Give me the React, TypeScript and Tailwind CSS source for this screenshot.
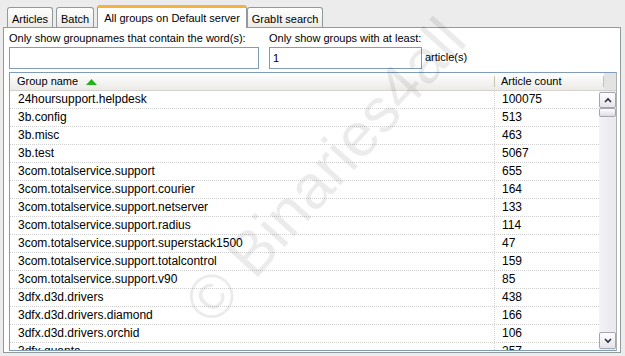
import { FC } from "react";

const rows: [string, string][] = [
    ["24hoursupport.helpdesk", "100075"],
    ["3b.config", "513"],
    ["3b.misc", "463"],
    ["3b.test", "5067"],
    ["3com.totalservice.support", "655"],
    ["3com.totalservice.support.courier", "164"],
    ["3com.totalservice.support.netserver", "133"],
    ["3com.totalservice.support.radius", "114"],
    ["3com.totalservice.support.superstack1500", "47"],
    ["3com.totalservice.support.totalcontrol", "159"],
    ["3com.totalservice.support.v90", "85"],
    ["3dfx.d3d.drivers", "438"],
    ["3dfx.d3d.drivers.diamond", "166"],
    ["3dfx.d3d.drivers.orchid", "106"],
    ["3dfx.quanta", "257"],
];

const Tab: FC<{ label: string; width: string; active?: boolean }> = ({ label, width, active }) =>
    active ? (
        <div className={`relative z-10 -mb-px h-[23px] text-center pt-[2px] bg-white border border-b-0 border-[#919b9c] rounded-t-[3px] border-t-[3px] border-t-[#f5b33d] whitespace-nowrap ${width}`}>
            {label}
        </div>
    ) : (
        <div className={`mt-[3px] h-[20px] text-center pt-[3px] bg-gradient-to-b from-white to-[#ecebe6] border border-b-0 border-[#919b9c] rounded-t-[3px] whitespace-nowrap ${width}`}>
            {label}
        </div>
    );

const App: FC = () => {
    return (
        <div
            className="relative w-[625px] h-[356px] overflow-hidden bg-[#ececec] text-[11px] text-black"
            style={{ fontFamily: '"Liberation Sans", Arial, sans-serif' }}
        >
            <div className="flex items-end h-[27px] pl-[7px] pt-[4px]">
                <Tab label="Articles" width="w-[46px]" />
                <div className="w-[3px]" />
                <Tab label="Batch" width="w-[38px]" />
                <div className="w-[3px]" />
                <Tab label="All groups on Default server" width="w-[150px]" active />
                <Tab label="GrabIt search" width="w-[76px]" />
            </div>

            <div className="ml-[3px] mr-[4px] h-[326px] bg-white border border-[#919b9c] flex flex-col pl-[5px] pr-[3px]">
                <div className="flex gap-[10px] pt-[2px]">
                    <div className="flex flex-col">
                        <span className="h-[17px] leading-[16px]">Only show groupnames that contain the word(s):</span>
                        <div className="w-[250px] h-[22px] border border-[#7f9db9] bg-white" />
                    </div>
                    <div className="flex flex-col">
                        <span className="h-[17px] leading-[16px]">Only show groups with at least:</span>
                        <div className="flex items-center gap-[3px]">
                            <div className="w-[153px] h-[22px] border border-[#7f9db9] bg-white pl-[3px] leading-[20px]">1</div>
                            <span className="-mt-[1px]">article(s)</span>
                        </div>
                    </div>
                </div>

                <div className="mt-[3px] flex-1 border border-[#7f9db9] border-r-[#b0b0b0] flex flex-col overflow-hidden">
                    <div className="flex h-[18px] shrink-0 bg-gradient-to-b from-white to-[#ebeae7] border-b border-[#d6d3ce]">
                        <div className="w-[485px] flex items-center pl-[7px] gap-[8px] border-r border-[#c7c5b2] my-[3px]">
                            Group name
                            <svg width="11" height="6" viewBox="0 0 11 6">
                                <path d="M5.5 0 L11 6 L0 6 Z" fill="#28b11e" />
                            </svg>
                        </div>
                        <div className="w-[109px] flex items-center pl-[6px] border-r border-[#c7c5b2] my-[3px]">
                            Article count
                        </div>
                        <div className="flex-1 bg-[#e3e3e3]" />
                    </div>
                    <div className="flex flex-1 overflow-hidden">
                        <div className="flex-1 flex flex-col">
                            {rows.map(([name, count]) => (
                                <div
                                    key={name}
                                    className="flex h-[18px] shrink-0 border-b border-dotted border-[#cfcfcf] leading-[17px] text-[12px]"
                                >
                                    <div className="w-[485px] pl-[8px] border-r border-dotted border-[#cfcfcf]">{name}</div>
                                    <div className="flex-1 pl-[7px]">{count}</div>
                                </div>
                            ))}
                        </div>
                        <div className="w-[17px] bg-gradient-to-r from-[#f3f3f6] to-[#e9e9ee] flex flex-col pt-[1px] pb-[1px]">
                            <div className="h-[16px] border border-[#a5a5b3] rounded-[2px] bg-gradient-to-b from-white to-[#e4e4ea] flex items-center justify-center">
                                <svg width="8" height="6" viewBox="0 0 8 6">
                                    <path d="M1 5 L4 2 L7 5" stroke="#2b2b45" strokeWidth="1.6" fill="none" />
                                </svg>
                            </div>
                            <div className="h-[9px] border border-[#a5a5b3] rounded-[2px] bg-gradient-to-b from-white to-[#dcdce4]" />
                            <div className="flex-1" />
                            <div className="h-[17px] border border-[#a5a5b3] rounded-[2px] bg-gradient-to-b from-white to-[#e4e4ea] flex items-center justify-center">
                                <svg width="8" height="6" viewBox="0 0 8 6">
                                    <path d="M1 1 L4 4 L7 1" stroke="#2b2b45" strokeWidth="1.6" fill="none" />
                                </svg>
                            </div>
                        </div>
                    </div>
                </div>
                <div className="h-[1px]" />
            </div>

            <div className="pointer-events-none absolute left-[80px] top-[140px] w-[490px] text-center -rotate-[48deg] text-[62px] leading-none text-black/[0.08] whitespace-nowrap">
                © Binaries4all
            </div>
        </div>
    );
};

export default App;
